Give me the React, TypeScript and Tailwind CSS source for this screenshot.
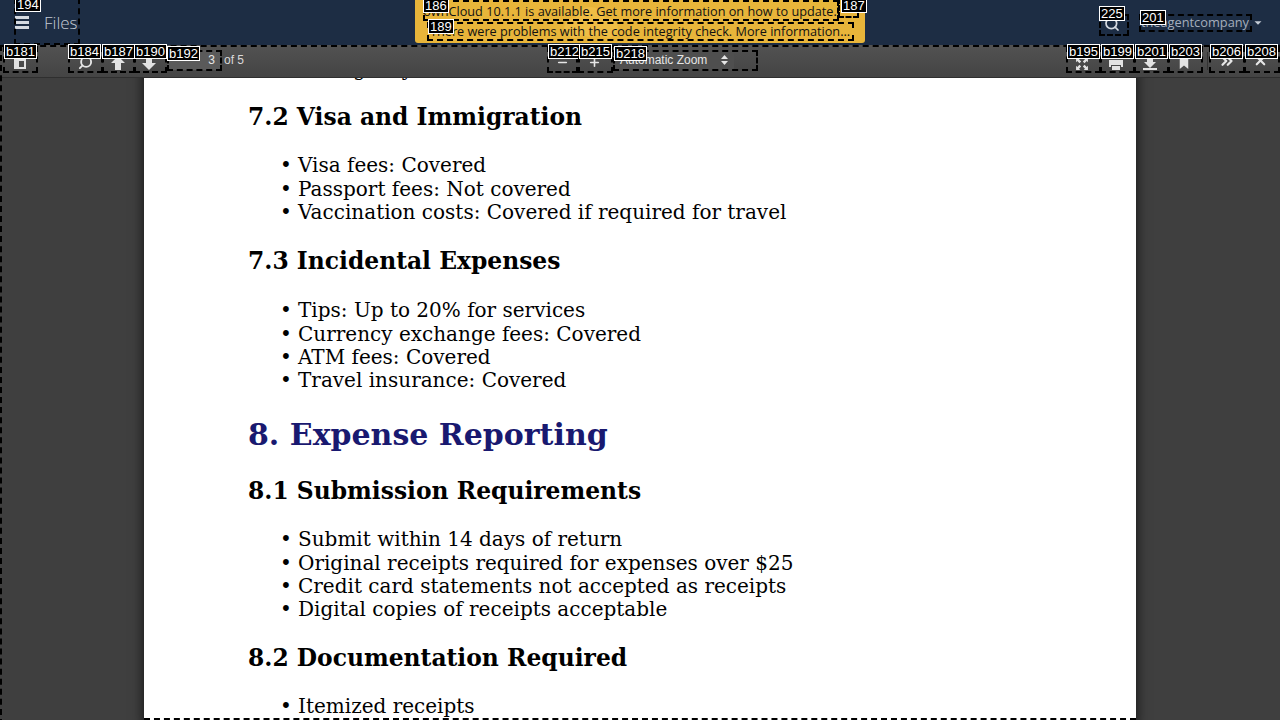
import { ReactNode } from "react";
import { ChevronDown, Search, Plus, Minus, X, ChevronsRight } from "lucide-react";

// Dashed outline + number tag drawn over the page by the annotation layer
const marks = [
  { label: "194", box: "left-[14px] top-[-2px] w-[66px] h-[47px]", tag: "left-[15px] top-[-3px]" },
  { label: "186", box: "left-[423px] top-[0px] w-[416px] h-[21px]", tag: "left-[423px] top-[-2px]" },
  { label: "187", box: "left-[838px] top-[-2px] w-[21px] h-[20px]", tag: "left-[841px] top-[-2px]" },
  { label: "189", box: "left-[427px] top-[22px] w-[427px] h-[19px]", tag: "left-[428px] top-[19px]" },
  { label: "225", box: "left-[1099px] top-[14px] w-[30px] h-[22px]", tag: "left-[1099px] top-[6px]" },
  { label: "201", box: "left-[1139px] top-[14px] w-[113px] h-[18px]", tag: "left-[1140px] top-[10px]" },
  { label: "b181", box: "left-[3px] top-[46px] w-[35px] h-[27px]", tag: "left-[4px] top-[44px]" },
  { label: "b184", box: "left-[68px] top-[46px] w-[35px] h-[27px]", tag: "left-[68px] top-[44px]" },
  { label: "b187", box: "left-[102px] top-[46px] w-[33px] h-[27px]", tag: "left-[102px] top-[44px]" },
  { label: "b190", box: "left-[134px] top-[46px] w-[33px] h-[27px]", tag: "left-[134px] top-[44px]" },
  { label: "b192", box: "left-[167px] top-[50px] w-[55px] h-[21px]", tag: "left-[167px] top-[46px]" },
  { label: "b212", box: "left-[547px] top-[46px] w-[31px] h-[27px]", tag: "left-[548px] top-[44px]" },
  { label: "b215", box: "left-[578px] top-[46px] w-[35px] h-[27px]", tag: "left-[579px] top-[44px]" },
  { label: "b218", box: "left-[613px] top-[50px] w-[145px] h-[21px]", tag: "left-[614px] top-[46px]" },
  { label: "b195", box: "left-[1066px] top-[46px] w-[35px] h-[27px]", tag: "left-[1067px] top-[44px]" },
  { label: "b199", box: "left-[1100px] top-[46px] w-[35px] h-[27px]", tag: "left-[1101px] top-[44px]" },
  { label: "b201", box: "left-[1134px] top-[46px] w-[35px] h-[27px]", tag: "left-[1135px] top-[44px]" },
  { label: "b203", box: "left-[1168px] top-[46px] w-[35px] h-[27px]", tag: "left-[1169px] top-[44px]" },
  { label: "b206", box: "left-[1209px] top-[46px] w-[36px] h-[27px]", tag: "left-[1210px] top-[44px]" },
  { label: "b208", box: "left-[1244px] top-[46px] w-[36px] h-[27px]", tag: "left-[1245px] top-[44px]" },
];

function Mark({ label, box, tag }: { label: string; box: string; tag: string }) {
  return (
    <>
      <div className={`absolute ${box} border-2 border-dashed border-black pointer-events-none`} />
      <span className={`absolute ${tag} h-[15px] px-[1px] border border-white bg-black text-[13px] leading-[13px] text-white font-['Liberation_Sans',sans-serif]`}>
        {label}
      </span>
    </>
  );
}

function ToolButton({ children, className }: { children: ReactNode; className?: string }) {
  return <div className={`w-[34px] h-[28px] flex items-center justify-center text-[#e6e6e6] ${className ?? ""}`}>{children}</div>;
}

// pdf.js toolbar glyphs
function SolidIcon({ d, className }: { d: string; className?: string }) {
  return (
    <svg width="16" height="16" viewBox="0 0 16 16" fill="#e2e2e2" className={className}>
      <path d={d} />
    </svg>
  );
}

const icons = {
  sidebar: "M2 3h12v10H2zM7 5v6h5V5z",
  prev: "M8 1L15 8H11V15H5V8H1z",
  next: "M5 1H11V8H15L8 15 1 8H5z",
  tray: "M5 1h6v6h3l-6 6-6-6h3zM1 13h14v2H1z",
  print: "M4 1h8v3H4zM1 5h14v7h-2v-2H3v2H1zM4 11h8v4H4z",
  mark: "M3 1h10v14l-5-4-5 4z",
  corners: "M1 1h5L4.5 2.5 7 5 5 7 2.5 4.5 1 6zM15 1v5l-1.5-1.5L11 7 9 5l2.5-2.5L10 1zM1 15v-5l1.5 1.5L5 9l2 2-2.5 2.5L6 15zM15 15h-5l1.5-1.5L9 11l2-2 2.5 2.5L15 10z",
};

function Bullets({ items }: { items: string[] }) {
  return (
    <ul className="pl-[32px] text-[20px] leading-[23.3px]">
      {items.map((item) => (
        <li key={item} className="flex">
          <span className="w-[18px] shrink-0">•</span>
          <span>{item}</span>
        </li>
      ))}
    </ul>
  );
}

function H2({ children, className }: { children: ReactNode; className?: string }) {
  return <h2 className={`text-[23.4px] leading-[30px] font-bold ${className ?? ""}`}>{children}</h2>;
}

export default function App() {
  return (
    <div className="relative w-[1280px] h-[720px] overflow-hidden bg-[#3f3f3f] font-['Liberation_Sans',sans-serif]">
      {/* ownCloud header */}
      <header className="h-[45px] bg-[#1d2d44] flex items-center justify-between relative">
        <div className="flex items-center pl-[15px] font-['Open_Sans',sans-serif]">
          <div className="w-[14px] flex flex-col gap-[2px]">
            <div className="h-[3px] bg-[#d5dae1]" />
            <div className="h-[3px] bg-[#d5dae1]" />
            <div className="h-[3px] bg-[#d5dae1]" />
          </div>
          <span className="ml-[15px] text-[17px] font-light text-[#c3cad4]">Files</span>
        </div>
        <div className="flex items-center pr-[15px] font-['Open_Sans',sans-serif] text-[#a5aebc] text-[12.8px]">
          <Search size={16} strokeWidth={2.6} className="text-[#d5dae1] mr-[21px] mt-[2px]" />
          <span>theagentcompany</span>
          <ChevronDown size={14} fill="#c5ccd6" strokeWidth={0} className="ml-[2px]" />
        </div>
      </header>

      {/* update notice */}
      <div className="absolute left-[415px] top-0 w-[450px] h-[43px] bg-[#e8b53a] rounded-b-[3px] text-[12.7px] leading-[20px] text-[#111111] text-center font-['Open_Sans',sans-serif] pt-px overflow-hidden">
        <svg width="70" height="43" viewBox="0 0 70 43" fill="#efbd45" className="absolute left-[145px] top-0">
          <circle cx="30" cy="22" r="15" />
          <circle cx="14" cy="28" r="10" />
          <circle cx="48" cy="28" r="10" />
        </svg>
        <p className="relative pr-[20px]">ownCloud 10.1.1 is available. Get more information on how to update.</p>
        <p className="relative">There were problems with the code integrity check. More information…</p>
      </div>

      {/* viewer toolbar */}
      <div className="h-[33px] bg-gradient-to-b from-[#525252] to-[#444444] border-b border-[#2f2f2f] flex items-center justify-between text-[#e6e6e6] text-[12px]">
        <div className="flex items-center">
          <ToolButton className="ml-[3px] mr-[31px]">
            <SolidIcon d={icons.sidebar} className="mt-[5px]" />
          </ToolButton>
          <ToolButton>
            <Search size={15} strokeWidth={3} className="-scale-x-100 mt-[3px]" />
          </ToolButton>
          <ToolButton className="-ml-px">
            <SolidIcon d={icons.prev} className="mt-[3px]" />
          </ToolButton>
          <ToolButton className="-ml-[3px]">
            <SolidIcon d={icons.next} className="mt-[3px]" />
          </ToolButton>
          <div className="ml-[1px] w-[54px] h-[20px] flex items-center justify-end pr-[6px] bg-[#5a5a5a] rounded-[2px] -mt-[2px]">3</div>
          <span className="ml-[3px] -mt-[2px] text-[#d9d9d9]">of 5</span>
        </div>
        <div className="absolute left-[547px] flex items-center">
          <ToolButton className="w-[31px] -ml-[2px]">
            <Minus size={13} strokeWidth={3} className="mt-[2px]" />
          </ToolButton>
          <ToolButton className="-ml-[2px]">
            <Plus size={13} strokeWidth={3} className="mt-[2px]" />
          </ToolButton>
          <div className="w-[120px] h-[20px] ml-[3px] -mt-[2px] flex items-center justify-between pl-[6px] pr-[6px] bg-[#4f4f4f] rounded-[2px]">
            <span>Automatic Zoom</span>
            <svg width="7" height="10" viewBox="0 0 7 10" fill="#e6e6e6">
              <path d="M3.5 0L7 4H0zM0 6h7l-3.500 4z" />
            </svg>
          </div>
        </div>
        <div className="flex items-center">
          <ToolButton>
            <SolidIcon d={icons.corners} className="mt-[6px] scale-[0.85]" />
          </ToolButton>
          <ToolButton>
            <SolidIcon d={icons.print} className="mt-[3px]" />
          </ToolButton>
          <ToolButton>
            <SolidIcon d={icons.tray} className="mt-[3px]" />
          </ToolButton>
          <ToolButton>
            <SolidIcon d={icons.mark} className="mt-[3px] scale-[0.85]" />
          </ToolButton>
          <div className="w-px h-[18px] bg-[#333333] mx-[3px] ml-[6px]" />
          <ToolButton className="mr-[1px]">
            <ChevronsRight size={18} strokeWidth={3} className="-mt-[1px] -ml-[3px]" />
          </ToolButton>
          <ToolButton>
            <X size={15} strokeWidth={3.4} className="-mt-[1px] -ml-[6px]" />
          </ToolButton>
        </div>
      </div>

      {/* pdf page, scrolled part way down */}
      <main className="h-[642px] overflow-hidden">
        <article className="ml-[144px] w-[992px] bg-white shadow-[0_0_12px_rgba(0,0,0,0.75)] h-[670px] pl-[104px] -mt-[19.6px] text-black font-['DejaVu_Serif',serif]">
          <Bullets items={["Emergency travel: Covered"]} />
          <H2 className="mt-[20.3px]">7.2 Visa and Immigration</H2>
          <div className="mt-[22.3px]">
            <Bullets items={["Visa fees: Covered", "Passport fees: Not covered", "Vaccination costs: Covered if required for travel"]} />
          </div>
          <H2 className="mt-[22px]">7.3 Incidental Expenses</H2>
          <div className="mt-[23.3px]">
            <Bullets items={["Tips: Up to 20% for services", "Currency exchange fees: Covered", "ATM fees: Covered", "Travel insurance: Covered"]} />
          </div>
          <h1 className="mt-[22.5px] text-[30px] leading-[40px] font-bold text-[#191970]">8. Expense Reporting</h1>
          <H2 className="mt-[21px]">8.1 Submission Requirements</H2>
          <div className="mt-[22.3px]">
            <Bullets
              items={[
                "Submit within 14 days of return",
                "Original receipts required for expenses over $25",
                "Credit card statements not accepted as receipts",
                "Digital copies of receipts acceptable",
              ]}
            />
          </div>
          <H2 className="mt-[21.5px]">8.2 Documentation Required</H2>
          <div className="mt-[21.8px]">
            <Bullets items={["Itemized receipts"]} />
          </div>
        </article>
      </main>

      {/* outline of the viewer and page elements */}
      <div className="absolute left-0 top-[45px] w-[1290px] h-[690px] border-2 border-dashed border-black pointer-events-none" />
      <div className="absolute left-[144px] top-[718px] w-[992px] border-b-2 border-dashed border-black pointer-events-none" />
      {marks.map((m) => (
        <Mark key={m.label} {...m} />
      ))}
    </div>
  );
}
